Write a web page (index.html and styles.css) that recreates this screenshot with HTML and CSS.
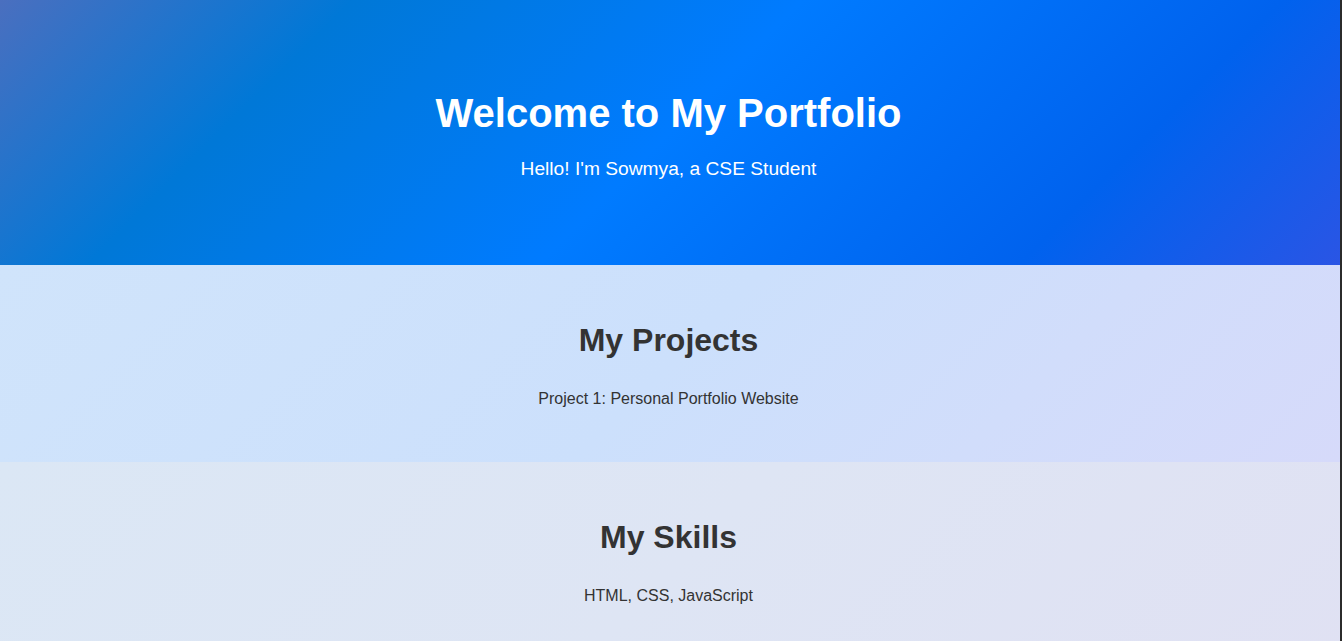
FILE: index.html
```html
<!DOCTYPE html>
<html lang="en">
<head>
<meta charset="utf-8">
<title>My Portfolio</title>
<link rel="stylesheet" href="styles.css">
</head>
<body>
<div class="page">
  <header class="hero">
    <h1 class="hero-title">Welcome to My Portfolio</h1>
    <p class="hero-sub">Hello! I'm Sowmya, a CSE Student</p>
  </header>
  <section class="block projects">
    <h2 class="block-title">My Projects</h2>
    <p class="block-text">Project 1: Personal Portfolio Website</p>
  </section>
  <section class="block skills">
    <h2 class="block-title">My Skills</h2>
    <p class="block-text">HTML, CSS, JavaScript</p>
  </section>
</div>
</body>
</html>
```

FILE: styles.css
```css
* { box-sizing: border-box; }

html, body {
  margin: 0;
  padding: 0;
  height: 100%;
}

body {
  background: #2b2b2b;
  font-family: Arial, "Liberation Sans", sans-serif;
  color: #333;
  overflow: hidden;
}

.page {
  width: calc(100% - 2px);
  height: 100%;
  overflow: hidden;
  background: #dfe4f4;
}

.hero {
  background: linear-gradient(135deg, #4a6fbf 0%, #0078d7 22%, #007bff 50%, #0062ee 80%, #2a55e5 100%);
  color: #fff;
  text-align: center;
  height: 265px;
  padding: 91px 23px 0 20px;
}

.hero-title {
  margin: 0 0 22px;
  font-size: 40px;
  font-weight: bold;
}

.hero-sub {
  margin: 0;
  font-size: 19.2px;
}

.block {
  text-align: center;
  padding: 57px 23px 0 20px;
}

.projects {
  background: linear-gradient(135deg, #d0e4fb 0%, #cce0fc 50%, #d6dafa 100%);
  height: 197px;
}

.skills {
  background: linear-gradient(135deg, #dbe7f5 0%, #dee5f4 50%, #e0e1f3 100%);
  height: 220px;
}

.block-title {
  margin: 0 0 31px;
  font-size: 32px;
  font-weight: bold;
  color: #333;
}

.block-text {
  margin: 0;
  font-size: 16px;
  color: #333;
}
```
